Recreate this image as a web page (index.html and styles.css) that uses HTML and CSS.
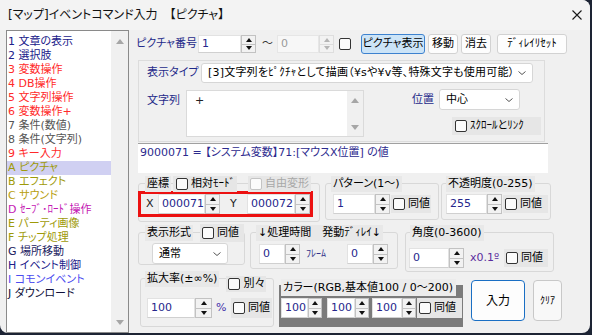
FILE: index.html
```html
<!DOCTYPE html>
<html lang="ja">
<head>
<meta charset="utf-8">
<title>イベントコマンド入力</title>
<link rel="stylesheet" href="styles.css">
</head>
<body>
<div class="win">
  <div class="titlebar">
    <span class="title">[マップ]イベントコマンド入力</span>
    <span class="title title-sub">【ピクチャ】</span>
    <svg class="close" width="10" height="10" viewBox="0 0 10 10"><path d="M0.5 0.5L9.5 9.5M9.5 0.5L0.5 9.5" stroke="#1a1a1a" stroke-width="1.1" fill="none"/></svg>
  </div>
  <div class="main">
    <div class="listbox">
      <ul class="cmds">
        <li class="c-navy">1 文章の表示</li>
        <li class="c-navy">2 選択肢</li>
        <li class="c-red">3 変数操作</li>
        <li class="c-red">4 DB操作</li>
        <li class="c-red">5 文字列操作</li>
        <li class="c-red">6 変数操作+</li>
        <li class="c-gray">7 条件(数値)</li>
        <li class="c-gray">8 条件(文字列)</li>
        <li class="c-red">9 キー入力</li>
        <li class="c-olive sel-item">A ピクチャ</li>
        <li class="c-olive">B エフェクト</li>
        <li class="c-gold">C サウンド</li>
        <li class="c-mag">D ｾｰﾌﾞ･ﾛｰﾄﾞ操作</li>
        <li class="c-olive">E パーティ画像</li>
        <li class="c-olive">F チップ処理</li>
        <li class="c-dnavy">G 場所移動</li>
        <li class="c-navy">H イベント制御</li>
        <li class="c-blue">I コモンイベント</li>
        <li class="c-dark">J ダウンロード</li>
      </ul>
      <div class="vscroll"><span class="stri stri-up"></span><span class="stri stri-dn"></span></div>
    </div>

    <div class="right">
      <div class="row1">
        <span class="lbl-num">ピクチャ番号</span>
        <div class="spin sp1"><span class="val">1</span><span class="btns"><i class="up"></i><i class="dn"></i></span></div>
        <span class="tilde">～</span>
        <div class="spin sp2 spin-dis"><span class="val">0</span><span class="btns"><i class="up"></i><i class="dn"></i></span></div>
        <i class="cb cb-top"></i>
        <span class="btn btn-show">ピクチャ表示</span>
        <span class="btn btn-move">移動</span>
        <span class="btn btn-erase">消去</span>
        <span class="btn btn-delay">ﾃﾞｨﾚｲﾘｾｯﾄ</span>
      </div>

      <div class="panel">
        <div class="prow1">
          <span class="plbl plbl-type">表示タイプ</span>
          <div class="sel sel-type"><span class="sel-type-text">[3]文字列をﾋﾟｸﾁｬとして描画（¥sや¥v等、特殊文字も使用可能）</span><svg class="chev" width="8" height="4" viewBox="0 0 8 4"><path d="M0.5 0.5L4 3.5L7.5 0.5" stroke="#555" fill="none"/></svg></div>
        </div>
        <div class="prow2">
          <span class="plbl plbl-str">文字列</span>
          <div class="tarea">
            <span class="tarea-text">+</span>
            <div class="tscroll"><span class="stri stri-up"></span><span class="stri stri-dn"></span></div>
          </div>
          <div class="pos-col">
            <div class="pos-row">
              <span class="plbl plbl-pos">位置</span>
              <div class="sel sel-pos"><span>中心</span><svg class="chev" width="8" height="4" viewBox="0 0 8 4"><path d="M0.5 0.5L4 3.5L7.5 0.5" stroke="#555" fill="none"/></svg></div>
            </div>
            <span class="cbw scroll-link"><i class="cb"></i>ｽｸﾛｰﾙとﾘﾝｸ</span>
          </div>
        </div>
      </div>

      <div class="expr">9000071 = 【システム変数】71:[マウスX位置] の値</div>

      <div class="rowA">
        <div class="grp g-coord">
          <div class="ghead">
            <span class="glbl">座標</span>
            <span class="cbw cbw-rel"><i class="cb"></i>相対ﾓｰﾄﾞ</span>
            <span class="cbw cbw-free dis"><i class="cb"></i>自由変形</span>
          </div>
          <div class="hilite">
            <span class="axis ax-x">X</span>
            <div class="spin spx"><span class="val">000071</span><span class="btns"><i class="up"></i><i class="dn"></i></span></div>
            <span class="axis ax-y">Y</span>
            <div class="spin spy"><span class="val">000072</span><span class="btns"><i class="up"></i><i class="dn"></i></span></div>
          </div>
        </div>
        <div class="grp g-pat">
          <div class="ghead"><span class="glbl">パターン(1～)</span></div>
          <div class="gbody">
            <div class="spin spp"><span class="val">1</span><span class="btns"><i class="up"></i><i class="dn"></i></span></div>
            <span class="cbw cbw-same"><i class="cb"></i>同値</span>
          </div>
        </div>
        <div class="grp g-op">
          <div class="ghead"><span class="glbl">不透明度(0-255)</span></div>
          <div class="gbody">
            <div class="spin spo"><span class="val">255</span><span class="btns"><i class="up"></i><i class="dn"></i></span></div>
            <span class="cbw cbw-same"><i class="cb"></i>同値</span>
          </div>
        </div>
      </div>

      <div class="rowB">
        <div class="grp g-fmt">
          <div class="ghead">
            <span class="glbl">表示形式</span>
            <span class="cbw cbw-fmt"><i class="cb"></i>同値</span>
          </div>
          <div class="gbody">
            <div class="sel sel-fmt"><span>通常</span><svg class="chev" width="8" height="4" viewBox="0 0 8 4"><path d="M0.5 0.5L4 3.5L7.5 0.5" stroke="#555" fill="none"/></svg></div>
          </div>
        </div>
        <div class="grp g-time">
          <div class="ghead"><span class="glbl">↓処理時間　発動ﾃﾞｨﾚｲ↓</span></div>
          <div class="gbody">
            <div class="spin spf"><span class="val">0</span><span class="btns"><i class="up"></i><i class="dn"></i></span></div>
            <span class="unit">ﾌﾚｰﾑ</span>
            <div class="spin spf spf2"><span class="val">0</span><span class="btns"><i class="up"></i><i class="dn"></i></span></div>
          </div>
        </div>
        <div class="grp g-ang">
          <div class="ghead"><span class="glbl">角度(0-3600)</span></div>
          <div class="gbody">
            <div class="spin spa"><span class="val">0</span><span class="btns"><i class="up"></i><i class="dn"></i></span></div>
            <span class="deg">x0.1º</span>
            <span class="cbw cbw-ang"><i class="cb"></i>同値</span>
          </div>
        </div>
      </div>

      <div class="rowC">
        <div class="grp g-zoom">
          <div class="ghead">
            <span class="glbl">拡大率(±∞%)</span>
            <span class="cbw cbw-sep"><i class="cb"></i>別々</span>
          </div>
          <div class="gbody">
            <div class="spin spz"><span class="val">100</span><span class="btns"><i class="up"></i><i class="dn"></i></span></div>
            <span class="pct">%</span>
            <span class="cbw cbw-zoom"><i class="cb"></i>同値</span>
          </div>
        </div>
        <div class="g-color">
          <div class="ghead ghead-color"><span class="glbl glbl-color">カラー(RGB,基本値100 / 0～200)</span></div>
          <div class="gbody">
            <div class="spin spc1"><span class="val">100</span><span class="btns"><i class="up"></i><i class="dn"></i></span></div>
            <div class="spin spc2"><span class="val">100</span><span class="btns"><i class="up"></i><i class="dn"></i></span></div>
            <div class="spin spc3"><span class="val">100</span><span class="btns"><i class="up"></i><i class="dn"></i></span></div>
            <span class="cbw cbw-color"><i class="cb"></i>同値</span>
          </div>
        </div>
        <span class="btn btn-ok">入力</span>
        <span class="btn btn-clr">ｸﾘｱ</span>
      </div>
    </div>
  </div>
</div>
</body>
</html>
```
FILE: styles.css
```css
* { box-sizing: border-box; }
html, body { margin: 0; padding: 0; }
body {
  background: #1d2434;
  font-family: "DejaVu Sans", "Noto Sans CJK JP", sans-serif;
  font-size: 11px;
  line-height: 14px;
  font-feature-settings: "palt";
  color: #000;
}
.win {
  width: 590px;
  height: 333px;
  background: #f0f0f0;
  border-radius: 0 8px 8px 8px;
  overflow: hidden;
}
.titlebar {
  height: 30px;
  display: flex;
  align-items: center;
  padding-left: 8px;
  background: #f3f3f3;
}
.title { font-size: 12px; line-height: 16px; color: #111; }
.title-sub { margin-left: 12px; }
.close { margin-left: auto; margin-right: 8px; }

.main { display: flex; padding-left: 6px; gap: 7px; }

/* list */
.listbox {
  width: 123px;
  height: 303px;
  border: 1px solid #8a8a8a;
  background: #fff;
  display: flex;
}
.cmds { list-style: none; margin: 0; padding: 4px 0 0 0; width: 104px; }
.cmds li { height: 14px; line-height: 14px; padding-left: 1px; white-space: nowrap; font-size: 11px; }
.sel-item { background: #d0d0f2; }
.c-navy { color: #20208a; }
.c-dnavy { color: #202060; }
.c-red { color: #ff2a2a; }
.c-gray { color: #555; }
.c-olive { color: #9e9a08; }
.c-gold { color: #b8a010; }
.c-mag { color: #c418b4; }
.c-blue { color: #4c4cf0; }
.c-dark { color: #10103a; }
.vscroll {
  width: 17px;
  background: #f0f0f0;
  display: flex;
  flex-direction: column;
  justify-content: space-between;
  align-items: center;
  padding: 8px 0 7px;
}
.stri { width: 0; height: 0; border-left: 4px solid transparent; border-right: 4px solid transparent; }
.stri-up { border-bottom: 5px solid #a6a6a6; }
.stri-dn { border-top: 5px solid #a6a6a6; }

/* right side */
.right { display: flex; flex-direction: column; align-items: flex-start; }
.row1 { display: flex; align-items: center; height: 20px; margin-top: 4px; }
.lbl-num { width: 62px; color: #1e2a8a; }
.tilde { margin-left: 6px; width: 15px; color: #333; }
.cb-top { margin-left: 5px; }

.btn {
  height: 20px;
  display: flex;
  align-items: center;
  justify-content: center;
  background: #fdfdfd;
  border: 1px solid #d2d2d2;
  border-radius: 3px;
  white-space: nowrap;
  color: #000;
}
.btn-show { margin-left: 10px; width: 64px; background: #cce4f7; border-color: #3d82cf; }
.btn-move { margin-left: 3px; width: 30px; }
.btn-erase { margin-left: 3px; width: 30px; }
.btn-delay { margin-left: 6px; width: 70px; }

/* spin box */
.spin { display: flex; height: 20px; }
.spin .val {
  flex: 1;
  background: #fff;
  border: 1px solid #e2e2e2;
  border-bottom-color: #d0d0d0;
  padding-left: 3px;
  display: flex;
  align-items: center;
  color: #26268c;
  white-space: nowrap;
  overflow: hidden;
}
.btns {
  width: 15px;
  display: flex;
  flex-direction: column;
  border: 1px solid #c2c2c2;
  background: #f2f2f2;
  flex: none;
}
.btns i { flex: 1; display: flex; align-items: center; justify-content: center; }
.btns i + i { border-top: 1px solid #c2c2c2; }
.btns .up::before { content: ""; border-left: 3.5px solid transparent; border-right: 3.5px solid transparent; border-bottom: 4px solid #111; }
.btns .dn::before { content: ""; border-left: 3.5px solid transparent; border-right: 3.5px solid transparent; border-top: 4px solid #111; }
.sp1 { width: 58px; height: 18px; }
.sp2 { width: 57px; height: 18px; }
.spin-dis .val { color: #9a9a9a; border-color: #e6e6e6; background: #f7f7f7; }
.spin-dis .btns { border-color: #dedede; }
.spin-dis .btns i + i { border-top-color: #dedede; }
.spin-dis .btns .up::before { border-bottom-color: #b5b5b5; }
.spin-dis .btns .dn::before { border-top-color: #b5b5b5; }
.spx { width: 62px; }
.spy { width: 63px; }
.spp { width: 57px; }
.spo { width: 56px; }
.spf { width: 41px; }
.spf2 { margin-left: 15px; }
.spa { width: 55px; }
.spz { width: 65px; }
.spz .btns { width: 17px; }
.spc1 { width: 41px; }
.spc2 { width: 42px; margin-left: 5px; }
.spc3 { width: 44px; margin-left: 3px; }
.spc1 .btns, .spc2 .btns, .spc3 .btns { width: 14px; }

/* checkbox */
.cb {
  width: 12px;
  height: 12px;
  border: 1px solid #333;
  border-radius: 2px;
  background: #fbfbfb;
  flex: none;
  display: block;
}
.cbw {
  display: flex;
  align-items: center;
  gap: 3px;
  background: #e6e6e6;
  padding-left: 2px;
  height: 18px;
  white-space: nowrap;
}
.dis { color: #a8a8a8; }
.dis .cb { border-color: #c4c4c4; }

/* select */
.sel {
  display: flex;
  align-items: center;
  justify-content: space-between;
  background: #fff;
  border: 1px solid #d6d6d6;
  border-radius: 3px;
  padding: 0 6px 0 6px;
  white-space: nowrap;
  overflow: hidden;
}
.chev { flex: none; }

/* panel */
.panel {
  margin: 6px 0 0 2px;
  width: 407px;
  height: 82px;
  border: 1px solid #dcdcdc;
  padding: 2px 0 0 8px;
}
.prow1 { display: flex; align-items: center; height: 20px; }
.plbl { color: #1e2a8a; }
.plbl-type { width: 54px; }
.sel-type { width: 332px; height: 20px; }
.sel-type-text { letter-spacing: 0.2px; }
.prow2 { display: flex; margin-top: 6px; }
.plbl-str { width: 39px; padding-top: 5px; }
.tarea {
  width: 178px;
  height: 47px;
  margin-top: 1px;
  display: flex;
  background: #fff;
  border: 1px solid #dadada;
}
.tarea-text { flex: 1; padding: 3px 0 0 8px; color: #222; }
.tscroll {
  width: 16px;
  background: #f0f0f0;
  display: flex;
  flex-direction: column;
  justify-content: space-between;
  align-items: center;
  padding: 7px 0 6px;
}
.pos-col { margin-left: 48px; display: flex; flex-direction: column; }
.pos-row { display: flex; align-items: center; height: 21px; }
.plbl-pos { width: 27px; }
.sel-pos { width: 81px; height: 21px; }
.scroll-link { margin: 7px 0 0 40px; width: 89px; height: 18px; padding-left: 3px; }

.expr {
  margin: 1px 0 0 2px;
  width: 410px;
  height: 30px;
  background: #fff;
  border-top: 1px solid #a0a0a0;
  padding: 2px 0 0 2px;
  color: #2c2a8e;
  white-space: nowrap;
}

/* groups */
.grp { border: 1px solid #d8d8d8; border-radius: 3px; }
.ghead { display: flex; align-items: center; height: 16px; margin-top: -8px; }
.glbl { background: #e8e8e8; padding: 0 2px; line-height: 16px; white-space: nowrap; }
.gbody { display: flex; align-items: center; }

.rowA { display: flex; align-items: flex-start; margin-top: 10px; }
.g-coord { margin-left: 2px; width: 182px; height: 39px; }
.g-coord .glbl { margin-left: 6px; }
.cbw-rel { margin-left: 2px; padding: 0 2px 0 3px; height: 16px; }
.cbw-free { margin-left: 11px; padding: 0 2px 0 2px; height: 16px; }
.hilite {
  margin: -1px 0 0 -1px;
  width: 175px;
  height: 26px;
  border: 3px solid #ec1111;
  display: flex;
  align-items: center;
}
.axis { color: #222; }
.ax-x { width: 17px; padding-left: 5px; }
.ax-y { width: 27px; padding-left: 10px; }

.g-pat { margin-left: 5px; width: 114px; height: 37px; }
.g-pat .glbl { margin-left: 5px; }
.g-pat .gbody { margin-top: 2px; padding-left: 7px; }
.cbw-same { margin-left: 1px; width: 40px; }
.g-op { margin-left: 2px; width: 110px; height: 37px; }
.g-op .glbl { margin-left: 4px; }
.g-op .gbody { margin-top: 2px; padding-left: 4px; }
.g-op .cbw-same { width: 45px; }

.rowB { display: flex; align-items: flex-start; margin-top: 10px; }
.g-fmt { margin-left: 2px; width: 107px; height: 33px; }
.g-fmt .glbl { margin-left: 6px; }
.cbw-fmt { margin-left: 7px; width: 44px; }
.g-fmt .gbody { margin-top: 2px; padding-left: 13px; }
.sel-fmt { width: 76px; height: 21px; }

.g-time { margin-left: 5px; width: 148px; height: 37px; }
.g-time .glbl { margin-left: 5px; }
.g-time .gbody { margin-top: 3px; padding-left: 8px; }
.unit { margin-left: 6px; width: 26px; font-size: 10px; color: #33338a; white-space: nowrap; }

.g-ang { margin-left: 7px; width: 149px; height: 40px; }
.g-ang .glbl { margin-left: 4px; }
.g-ang .gbody { margin-top: 7px; padding-left: 3px; }
.deg { margin-left: 6px; width: 30px; color: #5b2d9e; white-space: nowrap; }
.cbw-ang { margin-left: 4px; width: 44px; }

.rowC { display: flex; align-items: flex-start; margin-top: 6px; }
.g-zoom { margin-left: 4px; width: 134px; height: 49px; }
.g-zoom .ghead { align-items: flex-start; }
.g-zoom .glbl { margin-left: 4px; }
.cbw-sep { margin: 5px 0 0 7px; width: 40px; height: 16px; flex: none; }
.g-zoom .gbody { margin-top: 11px; padding-left: 6px; }
.pct { margin-left: 4px; width: 10px; color: #4433aa; }
.cbw-zoom { margin-left: 5px; width: 41px; height: 20px; }

.g-color { margin: 7px 0 0 5px; width: 184px; height: 42px; background: #7b7b7b; }
.ghead-color { margin-top: -6px; height: 17px; }
.glbl-color { margin-left: 2px; width: 175px; line-height: 17px; background: #ececec; }
.g-color .gbody { margin-top: 2px; padding-left: 2px; }
.cbw-color { margin-left: 1px; width: 45px; height: 20px; }

.btn-ok {
  margin: 2px 0 0 8px;
  width: 54px;
  height: 41px;
  border: 1.5px solid #1a6fc4;
  border-radius: 4px;
  background: #fdfdfd;
  font-size: 12px;
}
.btn-clr {
  margin: 2px 0 0 8px;
  width: 29px;
  height: 41px;
  border-radius: 4px;
  border-color: #c8c8c8;
  background: #f8f8f8;
  font-size: 10px;
}
```
